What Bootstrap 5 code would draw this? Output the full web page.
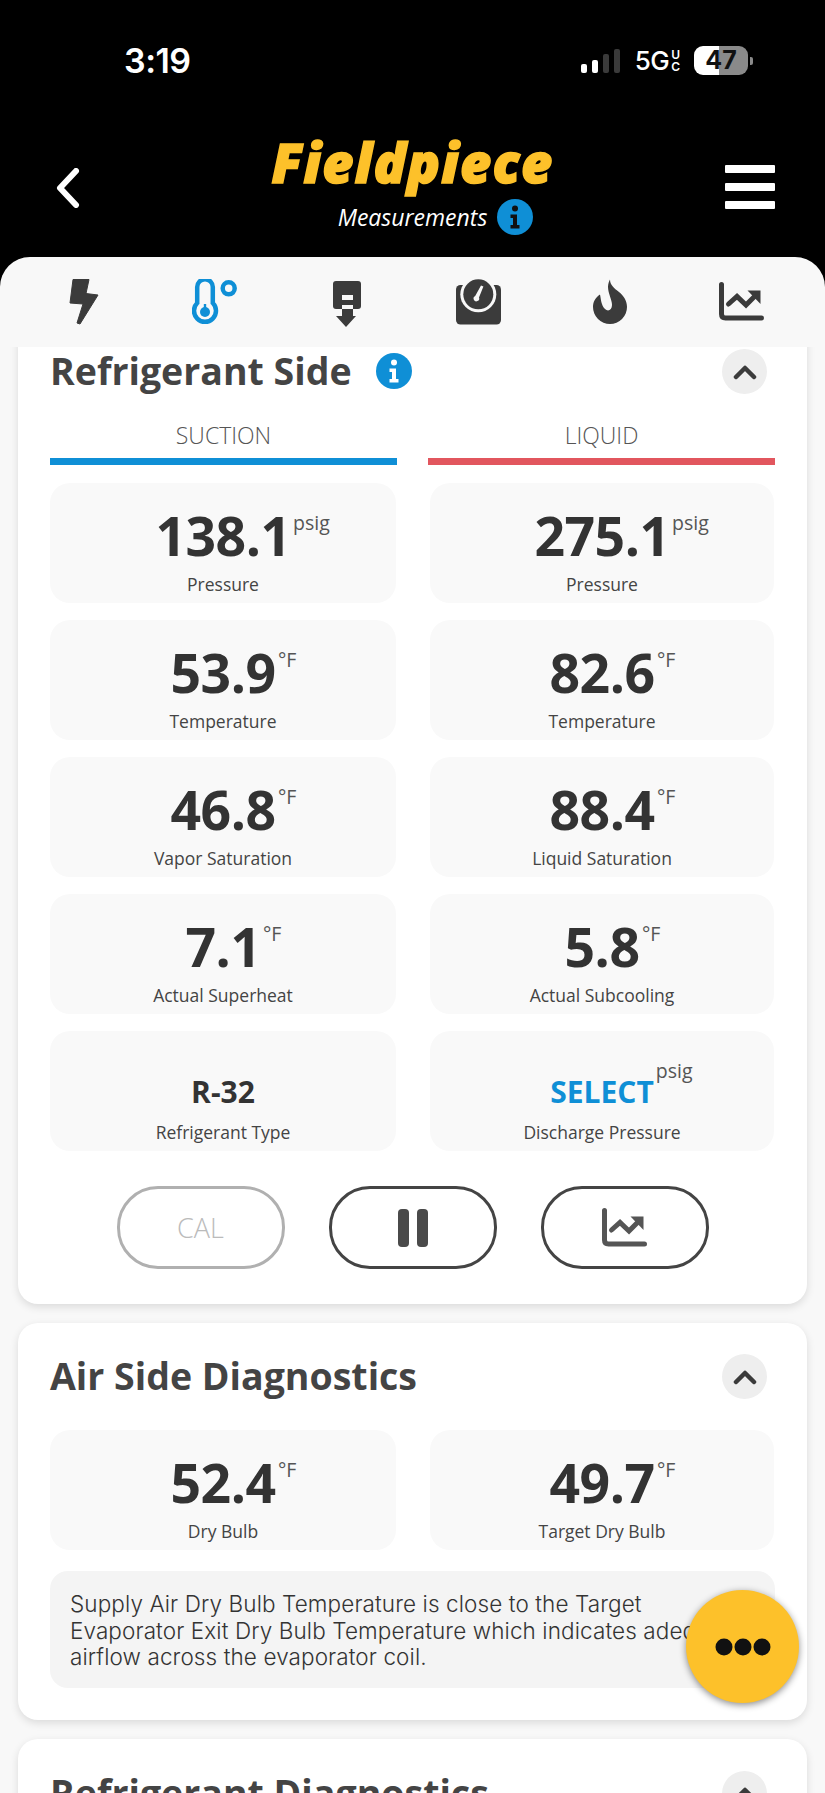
<!DOCTYPE html>
<html>
<head>
    <title>Measurements</title>
    <link href="https://cdn.jsdelivr.net/npm/bootstrap@5.3.3/dist/css/bootstrap.min.css" rel="stylesheet">
    <style>
        html, body { height: 1793px; overflow: hidden; }
        body { background: #000; font-family: "Open Sans", sans-serif; color: #333; position: relative; }

        .status-bar { height: 122px; padding: 39px 72px 0 124px; color: #fff; }
        .status-time { font: 600 34px/44px Inter, sans-serif; letter-spacing: -.5px; }
        .status-right { padding-top: 7px; }
        .signal-bars { gap: 5px; height: 24px; margin-right: 15px; }
        .signal-bars i { display: block; width: 6px; background: #fff; border-radius: 2px; }
        .signal-bars i.off { background: #3a3a3a; }
        .net-type { font: 500 26px/1 Inter, sans-serif; letter-spacing: -.5px; margin-right: 14px; }
        .net-uc { font: 600 12px/12px Inter, sans-serif; letter-spacing: 0; margin-left: 2px; }
        .batt { width: 54px; height: 29px; border-radius: 9px; color: #111; font: 700 25px/29px Inter, sans-serif; text-align: center;
            background: linear-gradient(90deg, #fff 0, #fff 47%, #8a8a8a 47%, #8a8a8a 100%); }
        .batt-tip { width: 3px; height: 8px; background: #8a8a8a; border-radius: 0 2px 2px 0; margin-left: 2px; }

        .app-head { height: 135px; padding: 0 50px 0 55px; position: relative; }
        .head-back { margin-top: 46px; }
        .head-mid { text-align: center; flex: 1; padding-left: 19px; }
        .brand-name { font: italic 800 54px/56px "Open Sans", sans-serif; color: #fdc12a; letter-spacing: 1.2px; -webkit-text-stroke: 1.5px #fdc12a; margin-top: 12px; }
        .brand-sub { color: #fff; font: italic 500 23px/30px "Open Sans", sans-serif; gap: 10px; margin-top: 9px; padding-left: 46px; }
        .info-dot { width: 36px; height: 36px; border-radius: 50%; background: #0f8fd6; flex: none; }
        .burger { width: 50px; margin-top: 43px; gap: 10px; }
        .burger i { display: block; height: 8px; background: #fff; border-radius: 1px; }

        .tab-strip { height: 90px; background: #f8f8f8; border-radius: 30px 30px 0 0; padding: 0 18px; position: relative; z-index: 2; }
        .tab-cell { flex: 1; text-align: center; padding-top: 22px; }

        .scroll-zone { background: #f8f8f8; height: 1456px; margin-top: -10px; overflow: hidden; padding: 0 18px; }
        .panel { border: 0; border-radius: 0 0 20px 20px; box-shadow: 0 3px 8px rgba(0,0,0,.12); padding: 10px 32px 0; background: #fff; margin-bottom: 19px; }
        .panel-round { border-radius: 20px; padding-top: 0; }
        .panel-title { font: 700 37.5px/48px "Open Sans", sans-serif; color: #444; margin: 0; }
        .panel-head { height: 48px; }
        .fold-btn { width: 45px; height: 45px; border-radius: 50%; background: #eee; border: 0; padding: 0; margin-right: 8px; margin-left: auto; }
        .side-label { font: 300 23px/30px "Open Sans", sans-serif; color: #555; text-align: center; }
        .side-rule { height: 7px; margin-top: 8px; }

        .tile-grid { display: grid; grid-template-columns: 346px 344px; column-gap: 34px; row-gap: 17px; }
        .tile { height: 120px; background: #f9f9f9; border-radius: 20px; text-align: center; padding-top: 19px; }
        .tile-val { font: 700 53.5px/68px "Open Sans", sans-serif; color: #333; display: inline-block; position: relative; letter-spacing: -.5px; vertical-align: top; }
        .tile-val.small-val { font-size: 30px; letter-spacing: 0; margin-top: 8px; margin-bottom: -8px; }
        .tile-val.pick { color: #0f8fd6; }
        .tile-unit { position: absolute; left: 100%; top: 10px; margin-left: 2.5px; font: 400 19.5px/22px "Open Sans", sans-serif; color: #555; letter-spacing: 0; }
        .pick .tile-unit { top: 2px; margin-left: 2px; }
        .tile-cap { font: 400 17.5px/24px "Open Sans", sans-serif; color: #444; margin-top: 1.5px; }

        .pill-btn { width: 168px; height: 83px; border-radius: 41px; border: 3px solid #444; background: #fff; padding: 0; color: #444; }
        .pill-btn.off { border-color: #b0b0b0; color: #bbb; font: 300 27px/1 "Open Sans", sans-serif; }
        .note-box { margin-top: 21px; height: 117px; background: #f4f4f4; border-radius: 18px; padding: 20px 24px 20px 20px; font: 300 22.5px/26.5px Inter, sans-serif; letter-spacing: .1px; color: #333; }

        .fab { position: absolute; left: 686px; top: 1590px; width: 113px; height: 113px; border-radius: 50%; background: #fdc12a; border: 0;
            box-shadow: 0 2px 7px rgba(0,0,0,.45); padding: 0; }
    </style>
</head>

<body>

<!-- barra do telefone -->
<div class="status-bar d-flex align-items-start justify-content-between">
    <div class="status-time">3:19</div>
    <div class="status-right d-flex align-items-center">
        <div class="signal-bars d-flex align-items-end">
            <i style="height: 9px"></i>
            <i style="height: 13px"></i>
            <i class="off" style="height: 19px"></i>
            <i class="off" style="height: 24px"></i>
        </div>
        <div class="net-type d-flex align-items-center">5G<span class="net-uc">U<br>C</span></div>
        <div class="batt">47</div>
        <div class="batt-tip"></div>
    </div>
</div>

<div class="app-head d-flex align-items-start">
    <div class="head-back">
        <svg width="26" height="40" viewBox="0 0 26 40"><path d="M21 3 5 20l16 17" fill="none" stroke="#fff" stroke-width="6" stroke-linecap="round" stroke-linejoin="round"/></svg>
    </div>
    <div class="head-mid">
        <div class="brand-name">Fieldpiece</div>
        <div class="brand-sub d-flex align-items-center justify-content-center">Measurements
            <span class="info-dot d-flex align-items-center justify-content-center">
                <svg width="12" height="24" viewBox="0 0 12 24"><circle cx="6" cy="3.5" r="3" fill="#111"/><path d="M1.5 9.5H8V20h2.5v3.5H1.5V20H4v-7H1.5z" fill="#111"/></svg>
            </span>
        </div>
    </div>
    <div class="burger d-flex flex-column">
        <i></i><i></i><i></i>
    </div>
</div>

<!-- abas -->
<div class="tab-strip d-flex">
    <div class="tab-cell">
        <svg width="30" height="46" viewBox="0 0 30 46"><path d="M4 .5h16l-3 14 12 1.500L11 45l-3-1 6-19-13-1z" fill="#3b3b3b" stroke="#3b3b3b" stroke-linejoin="round"/></svg>
    </div>
    <div class="tab-cell">
        <svg width="46" height="46" viewBox="0 0 46 46"><path d="M5.200 24V8a7.800 7.800 0 0 1 15.600 0V24a11 11 0 1 1-15.600 0z" fill="none" stroke="#0f8fd6" stroke-width="4.500"/><circle cx="13" cy="33" r="5" fill="#0f8fd6"/><path d="M11.800 25h2.400v6h-2.400z" fill="#0f8fd6"/><circle cx="36.700" cy="9.300" r="6" fill="none" stroke="#0f8fd6" stroke-width="4.500"/></svg>
    </div>
    <div class="tab-cell">
        <svg width="28" height="48" viewBox="0 -2 28 48"><rect width="28" height="28" rx="3" fill="#3b3b3b"/><path d="M9 14h11v5H9z" fill="#f8f8f8"/><path d="M9 24h11v4H9z" fill="#f8f8f8"/><path d="M9 28h11v7h3L13 46 3 35h6z" fill="#3b3b3b"/></svg>
    </div>
    <div class="tab-cell">
        <svg width="45" height="46" viewBox="0 0 45 46"><rect y="6" width="45" height="39.500" rx="4.500" fill="#3b3b3b"/><circle cx="22.300" cy="15.300" r="18" fill="#f8f8f8"/><circle cx="22.300" cy="15.300" r="15" fill="#3b3b3b"/><path d="M25 6.500l2.400 1-4.400 11a2.800 2.800 0 1 1-3.800-1.500z" fill="#f8f8f8"/></svg>
    </div>
    <div class="tab-cell">
        <svg width="34" height="46" viewBox="0 0 34 46"><path d="M17 .5C17 6 21 9 26 13c5 4 8 9 8 15A17 17 0 0 1 0 28c0-5 2-9 7-12.500 1 4.500 1 10.500 5 14.500 3 3 7 1 7-4 0-5-4-12-4-18 0-3 1-6 2-7.500z" fill="#3b3b3b"/></svg>
    </div>
    <div class="tab-cell">
        <svg width="45" height="46" viewBox="0 -3 45 46"><path d="M2.500 2.500V32q0 4 4 4H42.500" fill="none" stroke="#3b3b3b" stroke-width="5" stroke-linecap="round"/><path d="M9.500 22 18 14.500 27 23l10-10" fill="none" stroke="#3b3b3b" stroke-width="5" stroke-linecap="round"/><path d="M28.500 8.500h13V22z" fill="#3b3b3b"/></svg>
    </div>
</div>

<div class="scroll-zone">

    <div class="card panel">
        <div class="panel-head d-flex align-items-center">
            <h2 class="panel-title">Refrigerant Side</h2>
            <span class="info-dot d-flex align-items-center justify-content-center ms-4">
                <svg width="12" height="24" viewBox="0 0 12 24"><circle cx="6" cy="3.5" r="3" fill="#fff"/><path d="M1.5 9.5H8V20h2.5v3.5H1.5V20H4v-7H1.500z" fill="#fff"/></svg>
            </span>
            <button class="fold-btn">
                <svg width="24" height="15" viewBox="0 0 24 15"><path d="M3 12l9-9 9 9" fill="none" stroke="#3b3b3b" stroke-width="4.5" stroke-linecap="round" stroke-linejoin="round"/></svg>
            </button>
        </div>

        <div class="d-flex justify-content-between" style="margin-top: 25px">
            <div style="width: 347px">
                <div class="side-label">SUCTION</div>
                <div class="side-rule" style="background: #0f8fd6"></div>
            </div>
            <div style="width: 347px">
                <div class="side-label">LIQUID</div>
                <div class="side-rule" style="background: #e2565e"></div>
            </div>
        </div>

        <div class="tile-grid" style="margin-top: 18px">
            <div class="tile"><div class="tile-val">138.1<span class="tile-unit">psig</span></div><div class="tile-cap">Pressure</div></div>
            <div class="tile"><div class="tile-val">275.1<span class="tile-unit">psig</span></div><div class="tile-cap">Pressure</div></div>
            <div class="tile"><div class="tile-val">53.9<span class="tile-unit">°F</span></div><div class="tile-cap">Temperature</div></div>
            <div class="tile"><div class="tile-val">82.6<span class="tile-unit">°F</span></div><div class="tile-cap">Temperature</div></div>
            <div class="tile"><div class="tile-val">46.8<span class="tile-unit">°F</span></div><div class="tile-cap">Vapor Saturation</div></div>
            <div class="tile"><div class="tile-val">88.4<span class="tile-unit">°F</span></div><div class="tile-cap">Liquid Saturation</div></div>
            <div class="tile"><div class="tile-val">7.1<span class="tile-unit">°F</span></div><div class="tile-cap">Actual Superheat</div></div>
            <div class="tile"><div class="tile-val">5.8<span class="tile-unit">°F</span></div><div class="tile-cap">Actual Subcooling</div></div>
            <div class="tile"><div class="tile-val small-val">R-32</div><div class="tile-cap">Refrigerant Type</div></div>
            <div class="tile"><div class="tile-val small-val pick">SELECT<span class="tile-unit">psig</span></div><div class="tile-cap">Discharge Pressure</div></div>
        </div>

        <div class="d-flex justify-content-center" style="gap: 44px; margin: 35px 0 35px">
            <button class="btn pill-btn off">CAL</button>
            <button class="btn pill-btn">
                <svg width="30" height="38" viewBox="0 0 30 38"><rect x="0" y="0" width="11" height="38" rx="4" fill="#4a4a4a"/><rect x="19" y="0" width="11" height="38" rx="4" fill="#4a4a4a"/></svg>
            </button>
            <button class="btn pill-btn">
                <svg width="45" height="40" viewBox="0 0 45 40"><path d="M2.500 2.500V32q0 4 4 4H42.500" fill="none" stroke="#555" stroke-width="5" stroke-linecap="round"/><path d="M9.500 22 18 14.500 27 23l10-10" fill="none" stroke="#555" stroke-width="5" stroke-linecap="round"/><path d="M28.500 8.500h13V22z" fill="#555"/></svg>
            </button>
        </div>
    </div>

    <div class="card panel panel-round">
        <div class="panel-head d-flex align-items-center" style="margin-top: 29px">
            <h2 class="panel-title">Air Side Diagnostics</h2>
            <button class="fold-btn">
                <svg width="24" height="15" viewBox="0 0 24 15"><path d="M3 12l9-9 9 9" fill="none" stroke="#3b3b3b" stroke-width="4.5" stroke-linecap="round" stroke-linejoin="round"/></svg>
            </button>
        </div>
        <div class="tile-grid" style="margin-top: 30px">
            <div class="tile"><div class="tile-val">52.4<span class="tile-unit">°F</span></div><div class="tile-cap">Dry Bulb</div></div>
            <div class="tile"><div class="tile-val">49.7<span class="tile-unit">°F</span></div><div class="tile-cap">Target Dry Bulb</div></div>
        </div>
        <div class="note-box">Supply Air Dry Bulb Temperature is close to the Target Evaporator Exit Dry Bulb Temperature which indicates adequate airflow across the evaporator coil.</div>
        <div style="height: 32px"></div>
    </div>

    <div class="card panel panel-round">
        <div class="panel-head d-flex align-items-center" style="margin-top: 30px">
            <h2 class="panel-title">Refrigerant Diagnostics</h2>
            <button class="fold-btn">
                <svg width="24" height="15" viewBox="0 0 24 15"><path d="M3 12l9-9 9 9" fill="none" stroke="#3b3b3b" stroke-width="4.5" stroke-linecap="round" stroke-linejoin="round"/></svg>
            </button>
        </div>
        <div style="height: 60px"></div>
    </div>
</div>

<button class="fab d-flex align-items-center justify-content-center">
    <svg width="56" height="26" viewBox="0 0 56 26"><circle cx="9" cy="13" r="8.5" fill="#111"/><circle cx="28" cy="13" r="8.5" fill="#111"/><circle cx="47" cy="13" r="8.5" fill="#111"/></svg>
</button>

<script src="https://cdn.jsdelivr.net/npm/bootstrap@5.3.3/dist/js/bootstrap.bundle.min.js"></script>
</body>
</html>
